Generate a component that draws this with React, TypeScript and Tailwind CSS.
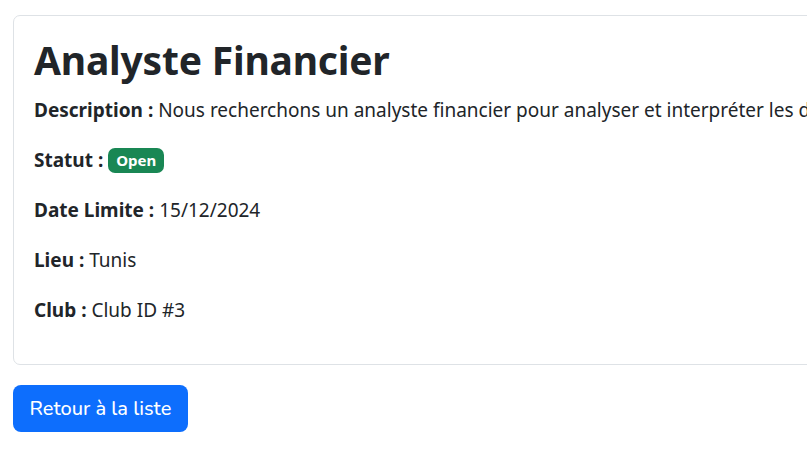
import React from 'react';

const Field: React.FC<{ label: string; children: React.ReactNode }> = ({ label, children }) => (
  <p className="mb-[20px] leading-[30px] whitespace-nowrap">
    <strong className="font-bold">{label} :</strong> {children}
  </p>
);

const App: React.FC = () => {
  return (
    <div className="w-[807px] h-[465px] overflow-hidden bg-white text-[#212529] text-[19px] font-['Segoe_UI','Noto_Sans',sans-serif]">
      <div className="pt-[15px] pl-[13px]">
        <div className="w-[1200px] border border-[#dee2e6] rounded-[7px] p-[20px] pb-[19px]">
          <h1 className="text-[39px] font-bold leading-[48px] mb-[11px] tracking-[-0.2px]">Analyste Financier</h1>
          <Field label="Description">
            Nous recherchons un analyste financier pour analyser et interpréter les données financières de l'entreprise.
          </Field>
          <Field label="Statut">
            <span className="inline-block align-[1px] bg-[#198754] text-white text-[15px] font-bold leading-none px-[8px] py-[5px] rounded-[7px]">
              Open
            </span>
          </Field>
          <Field label="Date Limite">15/12/2024</Field>
          <Field label="Lieu">Tunis</Field>
          <Field label="Club">Club ID #3</Field>
        </div>
        <button
          type="button"
          className="mt-[20px] h-[47px] px-[16.5px] rounded-[8px] bg-[#0d6efd] text-white text-[20px] leading-[30px] font-['Nunito','Lato',sans-serif] font-medium"
        >
          Retour à la liste
        </button>
      </div>
    </div>
  );
};

export default App;
